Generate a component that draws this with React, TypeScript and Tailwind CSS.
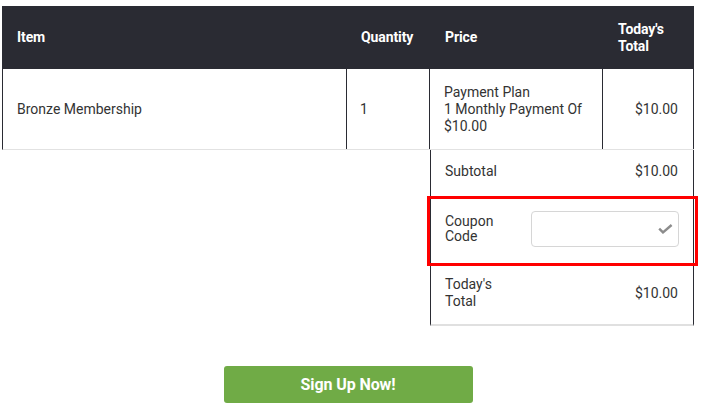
import React, { useState } from "react";

const font = { fontFamily: "Roboto, 'Liberation Sans', sans-serif" };

const CheckIcon: React.FC = () => (
  <svg width="15" height="10" viewBox="0 0 15 10" className="shrink-0">
    <path
      d="M1.2 4.6 L5 8.4 L13.6 1"
      fill="none"
      stroke="#8c8c8c"
      strokeWidth="2.4"
      strokeLinejoin="miter"
    />
  </svg>
);

const App: React.FC = () => {
  const [coupon, setCoupon] = useState("");

  return (
    <div
      className="w-[725px] h-[419px] bg-white text-[14px] text-[#333] pt-[6px]"
      style={font}
    >
      <div className="ml-[2px] w-[692px]">
        {/* Header */}
        <div className="flex h-[63px] bg-[#2a2b33] text-white font-bold text-[14px] leading-[17px] tracking-[-0.1px]">
          <div className="w-[345px] flex items-center pl-[15px]">Item</div>
          <div className="w-[83px] flex items-center pl-[14px]">Quantity</div>
          <div className="w-[173px] flex items-center pl-[15px]">Price</div>
          <div className="w-[91px] flex items-center pl-[15px]">
            Today's
            <br />
            Total
          </div>
        </div>

        {/* Line item */}
        <div className="flex h-[81px] border-l border-b border-l-[#2a2b33] border-b-[#e2e2e2] leading-[17px]">
          <div className="w-[344px] flex items-center pl-[14px] border-r border-[#2a2b33]">
            Bronze Membership
          </div>
          <div className="w-[83px] flex items-center pl-[13px] border-r border-[#2a2b33]">
            1
          </div>
          <div className="w-[173px] flex items-center pl-[14px] border-r border-[#2a2b33]">
            <div>
              Payment Plan
              <br />1 Monthly Payment Of
              <br />
              $10.00
            </div>
          </div>
          <div className="w-[91px] flex items-center justify-end pr-[15px] border-r border-[#2a2b33]">
            $10.00
          </div>
        </div>

        {/* Totals */}
        <div className="ml-[428px] w-[264px] border-l border-r border-[#2a2b33] border-b-2 border-b-[#e0e0e0]">
          <div className="flex items-center justify-between pl-[14px] pr-[15px] pt-[13px] pb-[15px] leading-[17px]">
            <span>Subtotal</span>
            <span>$10.00</span>
          </div>

          <div className="relative flex items-center pl-[14px] pr-[14px] py-[16px]">
            <div className="w-[72px] leading-[15px]">Coupon Code</div>
            <div className="ml-auto w-[148px] h-[36px] flex items-center justify-end pr-[5px] border border-[#d6d6d6] rounded-[4px]">
              <input
                value={coupon}
                onChange={(e) => setCoupon(e.target.value)}
                className="flex-1 min-w-0 h-full px-2 bg-transparent outline-none"
              />
              <CheckIcon />
            </div>
            <div className="absolute -left-[4px] -right-[5px] top-[1px] -bottom-[3px] border-[3px] border-[#f00] pointer-events-none" />
          </div>

          <div className="flex items-center justify-between pl-[14px] pr-[15px] pt-[13px] pb-[14px] leading-[17px]">
            <span className="w-[72px]">Today's Total</span>
            <span>$10.00</span>
          </div>
        </div>

        <button className="block mx-auto mt-[40px] w-[249px] h-[37px] rounded-[3px] bg-[#70ab46] text-white font-bold text-[16px] tracking-[-0.1px]">
          Sign Up Now!
        </button>
      </div>
    </div>
  );
};

export default App;
